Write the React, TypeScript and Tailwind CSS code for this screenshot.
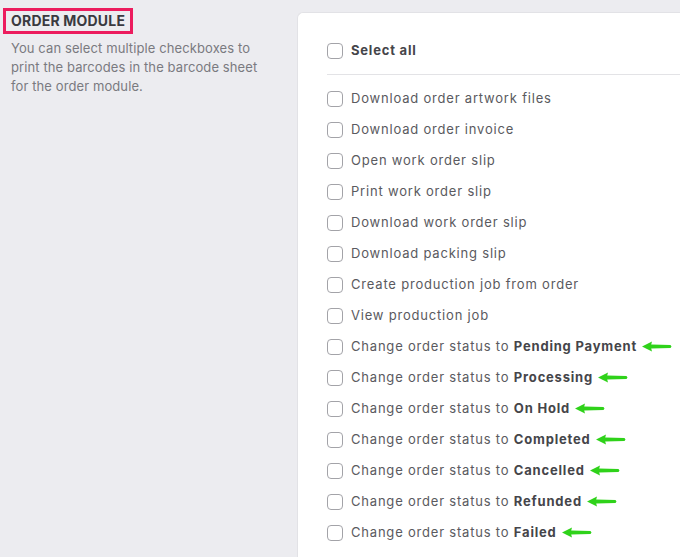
import React from "react";

const items = [
  "Download order artwork files",
  "Download order invoice",
  "Open work order slip",
  "Print work order slip",
  "Download work order slip",
  "Download packing slip",
  "Create production job from order",
  "View production job",
];

const statuses = ["Pending Payment", "Processing", "On Hold", "Completed", "Cancelled", "Refunded", "Failed"];

function Box() {
  return <span className="w-4 h-4 shrink-0 rounded-[4px] border border-[#a3a3a8] bg-white" />;
}

function Arrow() {
  return (
    <svg width="30" height="11" viewBox="0 0 30 11" className="-ml-[3px] shrink-0">
      <path d="M0 5.5 L10 0.5 L9.2 3.5 L28.5 4 L29.5 5.5 L28.5 7 L9.2 7.5 L10 10.5 Z" fill="#2fd21a" />
    </svg>
  );
}

export default function App() {
  return (
    <div
      className="w-[680px] h-[557px] overflow-hidden bg-[#ececf0] flex"
      style={{ fontFamily: "Inter, 'Noto Sans', sans-serif" }}
    >
      <div className="w-[297px] shrink-0 pl-[3px] pt-[8px]">
        <div className="inline-block border-[3px] border-[#ec1c5e] px-[5px] h-[26px] leading-[20px] text-[14px] font-bold text-[#3a3a40] tracking-[0.2px]">
          ORDER MODULE
        </div>
        <p className="pl-[8px] mt-[5px] text-[13px] leading-[19px] text-[#7a7a80] pr-[30px] tracking-[0.1px]">
          You can select multiple checkboxes to print the barcodes in the barcode sheet for the order module.
        </p>
      </div>
      <div className="flex-1 mt-[12px] bg-white rounded-tl-[6px] border-l border-t border-[#e2e2e6] pl-[29px] pt-[22px]">
        <label className="flex items-center gap-[8px] h-[31px]">
          <Box />
          <span className="text-[13px] font-bold text-[#45454a] tracking-[0.8px]">Select all</span>
        </label>
        <div className="h-px bg-[#e3e3e6] mt-[8px] mb-[8px]" />
        {items.map((t) => (
          <label key={t} className="flex items-center gap-[8px] h-[31px]">
            <Box />
            <span className="text-[13px] text-[#5a5a60] tracking-[0.8px]">{t}</span>
          </label>
        ))}
        {statuses.map((s) => (
          <label key={s} className="flex items-center gap-[8px] h-[31px]">
            <Box />
            <span className="text-[13px] text-[#5a5a60] tracking-[0.8px] whitespace-nowrap">
              Change order status to <b className="font-bold text-[#45454a]">{s}</b>
            </span>
            <Arrow />
          </label>
        ))}
      </div>
    </div>
  );
}
